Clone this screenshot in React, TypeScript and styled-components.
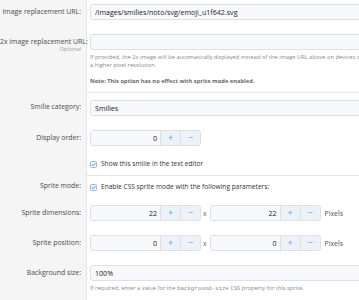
import React from "react";
import styled, { createGlobalStyle } from "styled-components";

const Global = createGlobalStyle`
  html, body { margin: 0; padding: 0; background: #ffffff; overflow: hidden; }
  body { width: 359px; height: 300px; font-family: "Open Sans", "Noto Sans", sans-serif; }
`;

const Form = styled.div`
  width: 416px;
  display: flex;
  flex-direction: column;
  border-bottom: 1px solid #d8d8d8;
  background: #fff;
`;

const Row = styled.div<{ $top?: number }>`
  display: grid;
  grid-template-columns: 87px 1fr;
  & > * { padding-top: ${(p) => (p.$top ?? 7)}px; padding-bottom: 7px; }
`;

const Dt = styled.div`
  background: #f5f5f5;
  border-right: 1px solid #e4e4e4;
  padding-right: 5px;
  text-align: right;
  box-sizing: border-box;
`;

const Label = styled.div<{ $lh?: number }>`
  font-size: 6.9px;
  color: #4a4a4a;
  line-height: ${(p) => p.$lh ?? 16}px;
  white-space: nowrap;
`;

const Optional = styled.div`
  font-size: 5.3px;
  color: #9a9a9a;
  line-height: 6px;
  margin-top: -4px;
`;

const Dd = styled.div<{ $sep?: boolean }>`
  padding-left: 3px;
  ${(p) => (p.$sep ? "border-top: 1px solid #e6e6e6;" : "")}
`;

const TextInput = styled.div`
  height: 16px;
  box-sizing: border-box;
  border: 1px solid #dde1e6;
  border-radius: 3px;
  background: #f7f9fc;
  font-size: 7.1px;
  color: #222;
  line-height: 14px;
  padding: 0 4px;
  white-space: nowrap;
  overflow: hidden;
`;

const Hint = styled.div<{ $mt?: number; $bold?: boolean }>`
  font-size: 5.75px;
  color: #8a8a8a;
  line-height: 8px;
  margin-top: ${(p) => p.$mt ?? 3}px;
  font-weight: ${(p) => (p.$bold ? 700 : 400)};
  ${(p) => (p.$bold ? "color: #6a6a6a;" : "")}
`;

const Code = styled.code`
  font-family: "Liberation Mono", monospace;
  font-size: 5.75px;
`;

const NumberGroup = styled.div`
  display: flex;
  align-items: center;
`;

const NumBox = styled.div`
  display: flex;
  height: 16px;
  box-sizing: border-box;
  border: 1px solid #dde1e6;
  border-radius: 3px;
  overflow: hidden;
`;

const NumValue = styled.div`
  width: 69px;
  box-sizing: border-box;
  background: #f7f9fc;
  font-size: 7.1px;
  color: #222;
  line-height: 14px;
  text-align: right;
  padding-right: 3px;
`;

const NumButton = styled.div`
  width: 20px;
  background: #edf2f8;
  border-left: 1px solid #dde1e6;
  color: #47a7eb;
  font-size: 9px;
  line-height: 14px;
  text-align: center;
  box-sizing: border-box;
`;

const Times = styled.span`
  font-size: 6.9px;
  color: #666;
  margin: 0 3px 0 2px;
`;

const Unit = styled.span`
  font-size: 6.9px;
  color: #505050;
  margin-left: 4px;
`;

const CheckRow = styled.label`
  display: flex;
  align-items: center;
  gap: 4px;
  font-size: 6.6px;
  line-height: 8px;
  color: #333;
  white-space: nowrap;
`;

const CheckIcon = () => (
  <svg width="7" height="7" viewBox="0 0 7 7">
    <rect x="0.5" y="0.5" width="6" height="6" rx="1" fill="#eef4fb" stroke="#8fbde6" />
    <path d="M1.8 3.6 L3 4.7 L5.3 2.2" fill="none" stroke="#3b8fd6" strokeWidth="0.9" />
  </svg>
);

const NumInput = ({ value }: { value: string }) => (
  <NumBox>
    <NumValue>{value}</NumValue>
    <NumButton>+</NumButton>
    <NumButton>−</NumButton>
  </NumBox>
);

export default function App() {
  return (
    <>
      <Global />
      <Form>
        <Row $top={4}>
          <Dt><Label>Image replacement URL:</Label></Dt>
          <Dd><TextInput>/images/smilies/noto/svg/emoji_u1f642.svg</TextInput></Dd>
        </Row>
        <Row>
          <Dt>
            <Label>2x image replacement URL:</Label>
            <Optional>Optional</Optional>
          </Dt>
          <Dd>
            <TextInput />
            <Hint>If provided, the 2x image will be automatically displayed instead of the image URL above on devices capable of displaying a higher pixel resolution.</Hint>
            <Hint $mt={8} $bold>Note: This option has no effect with sprite mode enabled.</Hint>
          </Dd>
        </Row>
        <Row>
          <Dt><Label>Smilie category:</Label></Dt>
          <Dd $sep><TextInput>Smilies</TextInput></Dd>
        </Row>
        <Row>
          <Dt><Label>Display order:</Label></Dt>
          <Dd><NumberGroup><NumInput value="0" /></NumberGroup></Dd>
        </Row>
        <Row>
          <Dt />
          <Dd><CheckRow><CheckIcon />Show this smilie in the text editor</CheckRow></Dd>
        </Row>
        <Row>
          <Dt><Label $lh={8}>Sprite mode:</Label></Dt>
          <Dd $sep><CheckRow><CheckIcon />Enable CSS sprite mode with the following parameters:</CheckRow></Dd>
        </Row>
        <Row>
          <Dt><Label>Sprite dimensions:</Label></Dt>
          <Dd>
            <NumberGroup>
              <NumInput value="22" />
              <Times>x</Times>
              <NumInput value="22" />
              <Unit>Pixels</Unit>
            </NumberGroup>
          </Dd>
        </Row>
        <Row>
          <Dt><Label>Sprite position:</Label></Dt>
          <Dd>
            <NumberGroup>
              <NumInput value="0" />
              <Times>x</Times>
              <NumInput value="0" />
              <Unit>Pixels</Unit>
            </NumberGroup>
          </Dd>
        </Row>
        <Row>
          <Dt><Label>Background size:</Label></Dt>
          <Dd>
            <TextInput>100%</TextInput>
            <Hint>If required, enter a value for the <Code>background-size</Code> CSS property for this sprite.</Hint>
          </Dd>
        </Row>
      </Form>
    </>
  );
}
